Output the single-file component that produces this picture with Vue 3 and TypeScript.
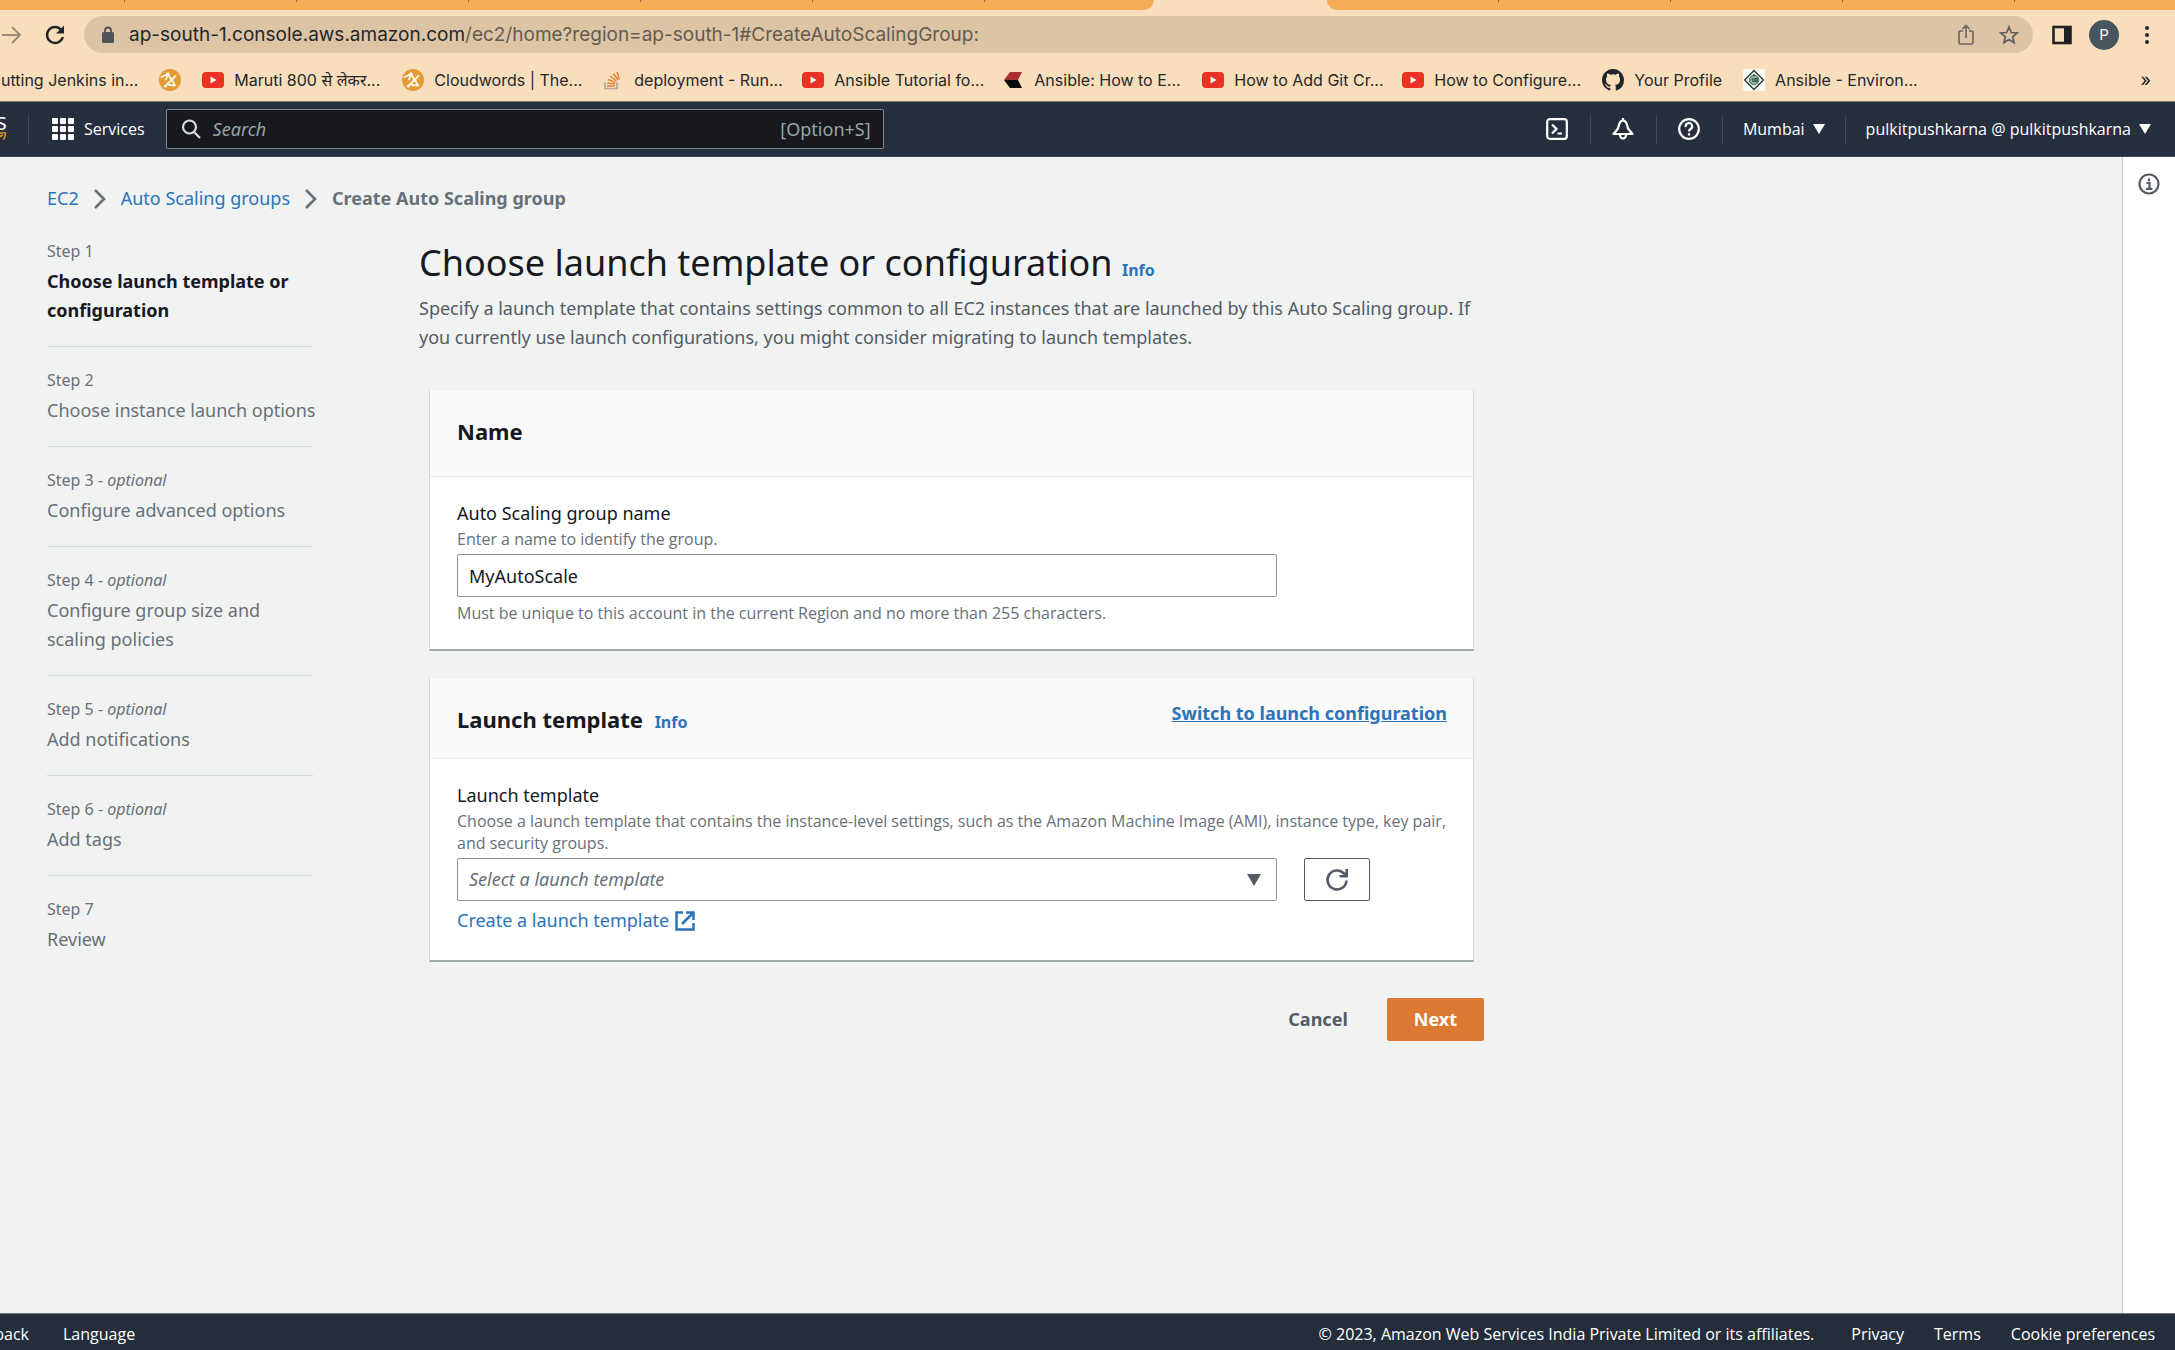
<script setup lang="ts">
import { ref } from 'vue'

interface Bookmark {
  icon: 'none' | 'jenkins' | 'youtube' | 'stack' | 'chevron' | 'github' | 'diamond'
  label: string
  fit?: boolean
}

interface Step {
  n: number
  title: string
  optional?: boolean
}

const bookmarks: Bookmark[] = [
  { icon: 'none', label: 'utting Jenkins in...', fit: true },
  { icon: 'jenkins', label: '', fit: true },
  { icon: 'youtube', label: 'Maruti 800 से लेकर...' },
  { icon: 'jenkins', label: 'Cloudwords | The...' },
  { icon: 'stack', label: 'deployment - Run...' },
  { icon: 'youtube', label: 'Ansible Tutorial fo...' },
  { icon: 'chevron', label: 'Ansible: How to E...' },
  { icon: 'youtube', label: 'How to Add Git Cr...' },
  { icon: 'youtube', label: 'How to Configure...' },
  { icon: 'github', label: 'Your Profile', fit: true },
  { icon: 'diamond', label: 'Ansible - Environ...' },
]

const steps: Step[] = [
  { n: 1, title: 'Choose launch template or configuration' },
  { n: 2, title: 'Choose instance launch options' },
  { n: 3, title: 'Configure advanced options', optional: true },
  { n: 4, title: 'Configure group size and scaling policies', optional: true },
  { n: 5, title: 'Add notifications', optional: true },
  { n: 6, title: 'Add tags', optional: true },
  { n: 7, title: 'Review' },
]

const search = ref('')
const groupName = ref('MyAutoScale')
const template = ref('')
</script>

<template>
  <div class="window">
    <div class="tabs" aria-hidden="true">
      <div class="tab-group left"><i v-for="n in 7" :key="n" class="tab"></i></div>
      <div class="tab-group right"><i v-for="n in 5" :key="n" class="tab"></i></div>
    </div>

    <div class="toolbar">
      <button class="plain forward" aria-label="Forward">
        <svg width="24" height="24" viewBox="0 0 24 24" fill="none" stroke="#9b8c78" stroke-width="2"><path d="M2 12h18M12 4l8 8-8 8" /></svg>
      </button>
      <button class="plain" aria-label="Reload">
        <svg width="22" height="22" viewBox="0 0 22 22"><path d="M17.5 6.2A8 8 0 1 0 18.8 13" fill="none" stroke="#222427" stroke-width="2.4" /><path d="M20 1.5v8h-8z" fill="#222427" /></svg>
      </button>
      <div class="omnibox">
        <svg width="14" height="18" viewBox="0 0 14 18"><rect x="1" y="6" width="12" height="11" rx="1.5" fill="#50525a" /><path d="M4 7V4.5a3 3 0 0 1 6 0V7" fill="none" stroke="#50525a" stroke-width="1.8" /></svg>
        <div class="url" role="textbox" aria-label="Address"><span class="host">ap-south-1.console.aws.amazon.com</span>/ec2/home?region=ap-south-1#CreateAutoScalingGroup:</div>
        <button class="plain" aria-label="Share">
          <svg width="18" height="22" viewBox="0 0 18 22" fill="none" stroke="#6b6763" stroke-width="1.7"><path d="M6 7H3.5A1.5 1.5 0 0 0 2 8.500v10A1.500 1.500 0 0 0 3.500 20h11a1.500 1.500 0 0 0 1.500-1.500v-10A1.500 1.500 0 0 0 14.500 7H12M9 14V2M5.500 5L9 1.500 12.500 5" /></svg>
        </button>
        <button class="plain star" aria-label="Bookmark this page">
          <svg width="20" height="20" viewBox="0 0 20 20" fill="none" stroke="#5f5d5b" stroke-width="1.7"><path d="M10 2l2.300 5.500 5.900.5-4.500 3.900 1.400 5.800L10 14.600l-5.100 3.100 1.400-5.800L1.800 8l5.900-.5z" /></svg>
        </button>
      </div>
      <button class="plain panel" aria-label="Side panel">
        <svg width="20" height="20" viewBox="0 0 20 20"><rect x="1.500" y="2" width="17" height="16" fill="none" stroke="#1f2124" stroke-width="2.600" /><rect x="12" y="1" width="7" height="18" fill="#1f2124" /></svg>
      </button>
      <button class="avatar" aria-label="Profile">P</button>
      <button class="plain more" aria-label="Menu">
        <svg width="6" height="20" viewBox="0 0 6 20" fill="#222427"><circle cx="3" cy="3" r="2" /><circle cx="3" cy="10" r="2" /><circle cx="3" cy="17" r="2" /></svg>
      </button>
    </div>

    <nav class="bookmarks" aria-label="Bookmarks">
      <a v-for="(b, i) in bookmarks" :key="i" href="#" class="bookmark" :class="{ fit: b.fit }" :aria-label="b.label || 'Jenkins'">
        <svg v-if="b.icon === 'jenkins'" width="22" height="22" viewBox="0 0 22 22"><circle cx="11" cy="11" r="11" fill="#e39b35" /><path d="M2.500 8L9 5l3.500 6L6.500 17M9 5l-2 5.500M12.500 11l4-4M13 11l3 5.500-6-.5" fill="none" stroke="#fdf3e2" stroke-width="1.800" stroke-linecap="round" stroke-linejoin="round" /><g fill="#fdf3e2"><circle cx="9" cy="5" r="1.800" /><circle cx="12.500" cy="11" r="1.800" /><circle cx="6.500" cy="17" r="1.600" /></g></svg>
        <svg v-else-if="b.icon === 'youtube'" width="22" height="22" viewBox="0 0 22 22"><rect y="3" width="22" height="16" rx="4" fill="#ec3323" /><path d="M8.500 7.500l6 3.500-6 3.500z" fill="#fff" /></svg>
        <svg v-else-if="b.icon === 'stack'" width="22" height="22" viewBox="0 0 22 22" fill="none"><path d="M3 13.500v6h12v-6" stroke="#b0aba4" stroke-width="1.700" /><path d="M5 17h8M5.200 14l7.900 1M6 10.500l7.400 2.900M8.200 7l6.200 5M11.500 4.500l4.500 6.500M15.200 3l2 7.500" stroke="#e8843a" stroke-width="1.500" /></svg>
        <svg v-else-if="b.icon === 'chevron'" width="22" height="22" viewBox="0 0 22 22"><path d="M8 3h12l-4 8H2z" fill="#a8302e" /><path d="M2 11h14l4 8H8z" fill="#0d0c0c" /></svg>
        <svg v-else-if="b.icon === 'github'" width="22" height="22" viewBox="0 0 16 16"><path fill="#22262b" d="M8 0C3.580 0 0 3.580 0 8c0 3.540 2.290 6.530 5.470 7.590.4.070.55-.17.55-.38 0-.19-.01-.82-.01-1.490-2.010.37-2.530-.49-2.690-.94-.09-.23-.48-.94-.82-1.130-.28-.15-.68-.52-.01-.53.63-.01 1.080.58 1.230.82.72 1.210 1.870.87 2.330.66.07-.52.28-.87.51-1.070-1.780-.2-3.640-.89-3.640-3.950 0-.87.31-1.590.82-2.150-.08-.2-.36-1.020.08-2.120 0 0 .67-.21 2.200.82a7.600 7.600 0 0 1 4 0c1.530-1.040 2.200-.82 2.200-.82.44 1.100.16 1.920.08 2.120.51.56.82 1.270.82 2.150 0 3.070-1.870 3.750-3.650 3.950.29.25.54.73.54 1.480 0 1.070-.01 1.930-.01 2.200 0 .21.15.46.55.38A8.010 8.010 0 0 0 16 8c0-4.420-3.580-8-8-8z" /></svg>
        <svg v-else-if="b.icon === 'diamond'" width="22" height="22" viewBox="0 0 22 22"><rect width="22" height="22" rx="2" fill="#fbfaf6" /><path d="M11 1.500L20.500 11 11 20.500 1.500 11z" fill="#e6ebe6" stroke="#2b3530" stroke-width="1.300" /><circle cx="11" cy="11" r="4.500" fill="#8fb59a" stroke="#4b6a57" stroke-width="1.200" /><path d="M8.500 10h1.500v3M12 9.500h2v3h-2zM11 5v2" fill="none" stroke="#33483b" stroke-width="1.200" /></svg>
        <span v-if="b.label">{{ b.label }}</span>
      </a>
      <button class="plain overflow" aria-label="More bookmarks">»</button>
    </nav>

    <header class="awsnav">
      <a href="#" class="logo" aria-label="AWS home">
        <span>s</span>
        <svg width="7" height="9" viewBox="0 0 7 9" fill="none" stroke="#e8912d" stroke-width="1.600"><path d="M0 2.200Q5 1 5.500 2.500T3.500 8.500M0 5.500l3-1.500" /></svg>
      </a>
      <button class="plain services">
        <svg width="22" height="22" viewBox="0 0 22 22" fill="#fff"><template v-for="y in 3" :key="y"><rect v-for="x in 3" :key="x" :x="(x - 1) * 8" :y="(y - 1) * 8" width="6" height="6" rx="1" /></template></svg>
        Services
      </button>
      <label class="search">
        <svg width="20" height="20" viewBox="0 0 20 20" fill="none" stroke="#d5dbdb" stroke-width="2.200"><circle cx="8.500" cy="8" r="6.500" /><path d="M13 13l6 6" /></svg>
        <input v-model="search" type="text" placeholder="Search" aria-label="Search" />
        <kbd>[Option+S]</kbd>
      </label>
      <div class="tools">
        <button class="plain tool" aria-label="CloudShell">
          <svg width="22" height="22" viewBox="0 0 22 22" fill="none" stroke="#fff" stroke-width="2.200"><rect x="1.200" y="1.200" width="19.600" height="19.600" rx="2.500" /><path d="M6 6.500l4.500 4.500L6 15.500M11.500 15.500H16" /></svg>
        </button>
        <button class="plain tool" aria-label="Notifications">
          <svg width="22" height="22" viewBox="0 0 22 22" fill="none" stroke="#fff" stroke-width="2.200" stroke-linejoin="round"><path d="M11 0v2.500M1.500 16h19L16 10.500 14.800 6Q13.500 2.500 11 2.500T7.200 6L6 10.500zM8 17a3 3.500 0 0 0 6 0" /></svg>
        </button>
        <button class="plain tool" aria-label="Help">
          <svg width="22" height="22" viewBox="0 0 22 22" fill="none" stroke="#fff" stroke-width="2.200"><circle cx="11" cy="11" r="9.800" /><path d="M7.800 9A3.200 3.200 0 1 1 12.500 11Q11 12 11 13.500" /><path d="M11 15.200v2.300" /></svg>
        </button>
        <button class="plain menu">Mumbai <svg width="12" height="10" viewBox="0 0 12 10"><path d="M0 0h12L6 10z" fill="#fff" /></svg></button>
        <button class="plain menu">pulkitpushkarna @ pulkitpushkarna <svg width="12" height="10" viewBox="0 0 12 10"><path d="M0 0h12L6 10z" fill="#fff" /></svg></button>
      </div>
    </header>

    <div class="body">
      <div class="page">
        <nav class="crumbs" aria-label="Breadcrumb">
          <a href="#">EC2</a>
          <svg width="12" height="20" viewBox="0 0 12 20" fill="none" stroke="#687078" stroke-width="2.600"><path d="M1 1l9 9-9 9" /></svg>
          <a href="#">Auto Scaling groups</a>
          <svg width="12" height="20" viewBox="0 0 12 20" fill="none" stroke="#687078" stroke-width="2.600"><path d="M1 1l9 9-9 9" /></svg>
          <strong>Create Auto Scaling group</strong>
        </nav>

        <div class="columns">
          <ol class="steps">
            <li v-for="s in steps" :key="s.n" :class="{ current: s.n === 1 }">
              <small>Step {{ s.n }}<template v-if="s.optional"> - <em>optional</em></template></small>
              <span>{{ s.title }}</span>
            </li>
          </ol>

          <main>
            <h1>Choose launch template or configuration <a href="#" class="info">Info</a></h1>
            <p class="lead">Specify a launch template that contains settings common to all EC2 instances that are launched by this Auto Scaling group. If you currently use launch configurations, you might consider migrating to launch templates.</p>

            <section class="card">
              <header class="tall"><h2>Name</h2></header>
              <div class="fields">
                <label for="group-name">Auto Scaling group name</label>
                <p class="hint">Enter a name to identify the group.</p>
                <div class="row"><input id="group-name" v-model="groupName" class="control" type="text" /></div>
                <p class="hint">Must be unique to this account in the current Region and no more than 255 characters.</p>
              </div>
            </section>

            <section class="card">
              <header>
                <h2>Launch template <a href="#" class="info">Info</a></h2>
                <a href="#" class="switch">Switch to launch configuration</a>
              </header>
              <div class="fields">
                <label for="template">Launch template</label>
                <p class="hint">Choose a launch template that contains the instance-level settings, such as the Amazon Machine Image (AMI), instance type, key pair, and security groups.</p>
                <div class="row">
                  <div class="select">
                    <select id="template" v-model="template" class="control"><option value="">Select a launch template</option></select>
                    <svg width="14" height="12" viewBox="0 0 14 12"><path d="M0 0h14L7 12z" fill="#545b64" /></svg>
                  </div>
                  <button class="refresh" aria-label="Refresh">
                    <svg width="24" height="24" viewBox="0 0 24 24" fill="none" stroke="#545b64" stroke-width="2.600"><path d="M21.500 12.500A9.500 9.500 0 1 1 19 5.500l2.500 2.500M21.700 1v7.300H14.500" /></svg>
                  </button>
                </div>
                <a href="#" class="create">Create a launch template
                  <svg width="20" height="20" viewBox="0 0 20 20" fill="none" stroke="currentColor" stroke-width="2.500"><path d="M8 1.500H1.500v17h17V12M11 1.500h7.500V9M18.500 1.500L7 13" /></svg>
                </a>
              </div>
            </section>

            <div class="actions">
              <button class="cancel">Cancel</button>
              <button class="next">Next</button>
            </div>
          </main>
        </div>
      </div>

      <aside>
        <button class="plain" aria-label="Open help panel">
          <svg width="22" height="22" viewBox="0 0 22 22" fill="none" stroke="#545b64" stroke-width="2.200"><circle cx="11" cy="11" r="9.500" /><path d="M8.500 9.800H11.500V15.500M8 15.800h6.500M11 5.500v2.500" /></svg>
        </button>
      </aside>
    </div>

    <footer>
      <span class="feedback"><a href="#">Feedback</a></span>
      <a href="#">Language</a>
      <span class="copy">© 2023, Amazon Web Services India Private Limited or its affiliates.</span>
      <a href="#">Privacy</a>
      <a href="#">Terms</a>
      <a href="#">Cookie preferences</a>
    </footer>
  </div>
</template>

<style>
body {
  margin: 0;
  background: #f1f3f3;
}
</style>

<style scoped>
* {
  box-sizing: border-box;
}
.window {
  min-height: 100vh;
  display: flex;
  flex-direction: column;
  overflow-x: hidden;
  font-family: "Noto Sans", "Open Sans", sans-serif;
  font-size: 18px;
  line-height: 29px;
  color: #16191f;
}
svg {
  display: block;
  flex: none;
}
a {
  color: #2b74b9;
  text-decoration: none;
}
h1, h2, p, ol {
  margin: 0;
  padding: 0;
}
button, input, select {
  font: inherit;
  color: inherit;
}
.plain {
  display: flex;
  align-items: center;
  border: 0;
  padding: 0;
  background: none;
}

/* browser chrome */
.tabs {
  display: flex;
  height: 10px;
  gap: 173px;
  background: #f9debb;
}
.tab-group {
  display: flex;
  overflow: hidden;
  background: #f5ae56;
}
.tab-group.left {
  border-bottom-right-radius: 10px;
}
.tab-group.right {
  flex: 1;
  border-bottom-left-radius: 10px;
}
.tab {
  flex: none;
  width: 172px;
  background: linear-gradient(#8c6a3e, #8c6a3e) right top / 1px 2px no-repeat;
}
.left .tab:first-child {
  width: 125px;
}
.left .tab:last-child {
  width: 169px;
  background: none;
}
.toolbar {
  display: flex;
  align-items: center;
  height: 49px;
  padding-right: 25px;
  background: #f9debb;
  font-family: Inter, Roboto, sans-serif;
}
.forward {
  margin-right: 20px;
}
.omnibox {
  flex: 1;
  display: flex;
  align-items: center;
  height: 37px;
  margin-left: 18px;
  padding: 0 14px 0 17px;
  border-radius: 19px;
  background: #dcc4a5;
}
.url {
  flex: 1;
  margin-left: 14px;
  color: #655c50;
  font-size: 19px;
  white-space: nowrap;
}
.host {
  color: #25272b;
}
.star {
  margin-left: 24px;
}
.panel {
  margin-left: 19px;
}
.avatar {
  width: 30px;
  height: 30px;
  margin: 0 25px 0 17px;
  border: 0;
  padding: 0;
  border-radius: 50%;
  background: #46565f;
  color: #fff;
  font-size: 15px;
  line-height: 30px;
}
.bookmarks {
  display: flex;
  align-items: center;
  gap: 21px;
  height: 43px;
  padding: 0 24px 0 1px;
  border-bottom: 1px solid #85776a;
  background: #f9debb;
  font-family: Inter, Roboto, "Noto Sans", sans-serif;
  font-size: 16px;
  line-height: 24px;
}
.bookmark {
  display: flex;
  align-items: center;
  gap: 10px;
  color: #25272b;
  white-space: nowrap;
}
.bookmark span {
  width: 147px;
}
.bookmark.fit span {
  width: auto;
}
.overflow {
  margin-left: auto;
  font-size: 18px;
}

/* service navigation */
.awsnav {
  display: flex;
  align-items: center;
  height: 55px;
  border-bottom: 1px solid #3f4855;
  background: #262f3e;
  color: #fff;
  font-family: "Open Sans", "Noto Sans", sans-serif;
  font-size: 16px;
  line-height: 24px;
}
.logo {
  display: flex;
  flex-direction: column;
  align-items: flex-end;
  width: 7px;
  padding-bottom: 8px;
  overflow: hidden;
  color: #fff;
  font-size: 24px;
  line-height: 20px;
}
.services {
  gap: 10px;
  height: 29px;
  margin-left: 21px;
  padding-left: 23px;
  border-left: 1px solid #414a57;
}
.search {
  display: flex;
  align-items: center;
  width: 718px;
  height: 40px;
  margin-left: 21px;
  padding: 0 12px 0 14px;
  border: 1px solid #7f8888;
  border-radius: 2px;
  background: #18191e;
  color: #95a5a6;
  font-family: "Noto Sans", "Open Sans", sans-serif;
  font-size: 18px;
}
.search input {
  flex: 1;
  min-width: 0;
  border: 0;
  padding: 0 12px;
  background: none;
  outline: 0;
}
.search input::placeholder {
  color: #95a5a6;
  font-style: italic;
}
.search kbd {
  font: inherit;
}
.tools {
  display: flex;
  margin-left: auto;
  padding-right: 24px;
}
.tools button {
  height: 29px;
}
.tools button + button {
  border-left: 1px solid #414a57;
}
.tool {
  width: 66px;
  justify-content: center;
}
.menu {
  gap: 8px;
  padding: 0 20px;
  white-space: nowrap;
}
.menu:last-child {
  padding-right: 0;
}

/* page */
.body {
  flex: 1;
  display: flex;
}
.page {
  flex: 1;
  padding: 27px 47px 40px;
}
aside {
  display: flex;
  flex-direction: column;
  align-items: center;
  width: 53px;
  padding-top: 16px;
  border-left: 1px solid #c3c9c9;
  background: #fff;
}
.crumbs {
  display: flex;
  align-items: center;
  gap: 15px;
}
.crumbs strong {
  color: #687078;
}
.columns {
  display: grid;
  grid-template-columns: 266px minmax(0, 1065px);
  gap: 106px;
  padding-top: 26px;
}
.steps {
  list-style: none;
}
.steps li {
  display: flex;
  flex-direction: column;
  gap: 4px;
  padding: 21px 0;
  border-bottom: 1px solid #d5dbdb;
  color: #687078;
}
.steps li:first-child {
  padding-top: 0;
}
.steps li:last-child {
  border: 0;
}
.steps small {
  font-size: 16px;
  line-height: 24px;
}
.steps span {
  margin-right: -5px;
}
.steps .current span {
  color: #16191f;
  font-weight: 700;
}
h1 {
  font-size: 36px;
  line-height: 48px;
  font-weight: 400;
}
.info {
  font-size: 16px;
  font-weight: 700;
}
.lead {
  margin-bottom: 37px;
  color: #545b64;
}
.card {
  margin: 0 10px 26px;
  border: 1px solid #d5dbdb;
  border-top-color: #eaeded;
  border-bottom: 2px solid #a0a9ab;
  background: #fff;
}
.card header {
  display: flex;
  justify-content: space-between;
  height: 81px;
  padding: 21px 26px 0 27px;
  border-bottom: 1px solid #eaeded;
  background: #fafafa;
}
.card header.tall {
  height: 87px;
}
h2 {
  font-size: 22px;
  line-height: 40px;
  font-weight: 700;
}
h2 .info {
  margin-left: 6px;
}
.switch {
  font-weight: 700;
  text-decoration: underline;
}
.fields {
  display: flex;
  flex-direction: column;
  align-items: flex-start;
  padding: 22px 26px 25px 27px;
}
.hint {
  color: #687078;
  font-family: "Open Sans", "Noto Sans", sans-serif;
  font-size: 16px;
  line-height: 22px;
}
.row {
  display: flex;
  gap: 27px;
  width: 100%;
  margin: 4px 0 5px;
}
.control {
  width: 820px;
  height: 43px;
  border: 1px solid #879596;
  border-radius: 2px;
  padding: 0 11px;
  background: #fff;
}
.select {
  position: relative;
}
.select svg {
  position: absolute;
  right: 16px;
  top: 16px;
  pointer-events: none;
}
select.control {
  appearance: none;
  color: #687078;
  font-style: italic;
}
.refresh {
  display: grid;
  place-items: center;
  width: 66px;
  height: 43px;
  padding: 0;
  border: 1px solid #545b64;
  border-radius: 2px;
  background: #fff;
}
.create {
  display: flex;
  align-items: center;
  gap: 6px;
}
.actions {
  display: flex;
  justify-content: flex-end;
  padding-top: 10px;
}
.actions button {
  height: 43px;
  border: 0;
  border-radius: 2px;
  padding: 0 27px;
  font-weight: 700;
}
.cancel {
  margin-right: 12px;
  background: none;
  color: #545b64;
}
.next {
  background: #dd7833;
  color: #fff;
}

footer {
  display: flex;
  align-items: center;
  height: 37px;
  padding: 3px 20px 0 0;
  gap: 30px;
  border-top: 1px solid #6c747d;
  background: #242e3b;
  color: #fff;
  font-family: "Open Sans", "Noto Sans", sans-serif;
  font-size: 16px;
  line-height: 32px;
  white-space: nowrap;
}
footer a {
  color: #fff;
}
.feedback {
  display: flex;
  justify-content: flex-end;
  width: 29px;
  margin-right: 4px;
  overflow: hidden;
}
.copy {
  margin: 0 7px 0 auto;
}
</style>
